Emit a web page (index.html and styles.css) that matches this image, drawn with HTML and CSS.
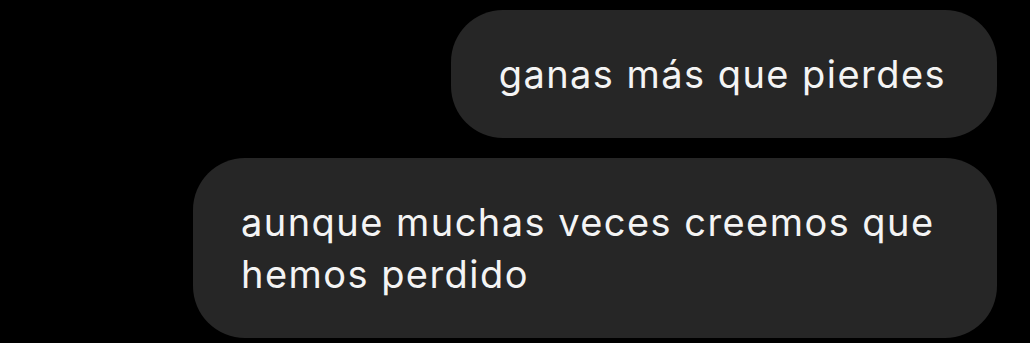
FILE: index.html
```html
<!DOCTYPE html>
<html lang="es">
<head>
    <meta charset="UTF-8">
    <meta name="viewport" content="width=device-width, initial-scale=1.0">
    <title>Chat</title>
    <link rel="stylesheet" href="styles.css">
</head>
<body>
    <div id="thread">
        <div class="bubble">ganas más que pierdes</div>
        <div class="bubble">aunque muchas veces creemos que hemos perdido</div>
    </div>
</body>
</html>
```

FILE: styles.css
```css
body, html {
    margin: 0;
    height: 100%;
    background-color: #000;
    font-family: Inter, "Noto Sans", Arial, sans-serif;
}

#thread {
    display: flex;
    flex-direction: column;
    align-items: flex-end;
    gap: 20px;
    padding: 10px 33px 0 0;
}

.bubble {
    background-color: #262626;
    color: #f4f4f4;
    font-size: 38px;
    letter-spacing: 1.45px;
    line-height: 52px;
    padding: 38px 51px 38px 48px;
    border-radius: 52px;
    max-width: 705px;
}
```
